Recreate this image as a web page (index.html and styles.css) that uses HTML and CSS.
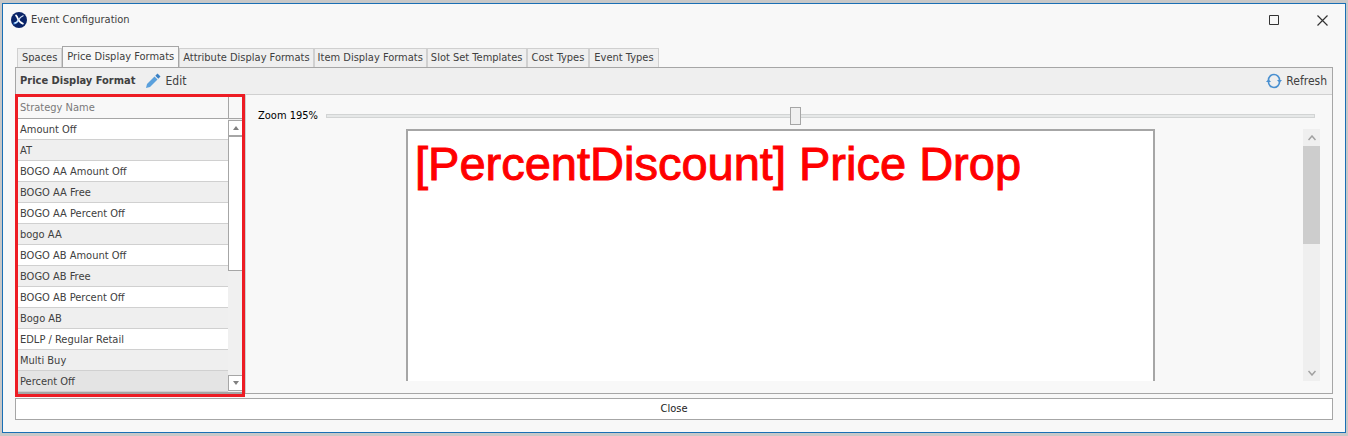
FILE: index.html
```html
<!DOCTYPE html>
<html lang="en">
<head>
<meta charset="utf-8">
<title>Event Configuration</title>
<link rel="stylesheet" href="styles.css">
</head>
<body>
<div class="window">
  <header class="titlebar">
    <svg class="logo" viewBox="0 0 16 16" aria-hidden="true"><circle cx="8" cy="8" r="8" fill="#0a2468"/><path d="M2.500 11.500q3 0 5-3.500" stroke="#3b8ee0" stroke-width="1.800" fill="none"/><path d="M4.500 3q1.500 1 2.500 4t5.500 5" stroke="#fff" stroke-width="1.800" fill="none"/><path d="M12.500 3.500Q9 5 7.500 8t-4 3" stroke="#d8e6f8" stroke-width="1.300" fill="none"/></svg>
    <h1 class="title">Event Configuration</h1>
    <button class="win-btn" aria-label="Maximize"><svg viewBox="0 0 11 11"><path d="M.5.5h9v9h-9z" fill="none" stroke="#333"/></svg></button>
    <button class="win-btn" aria-label="Close window"><svg viewBox="0 0 11 11"><path d="M.5.5l10 10M10.500.5l-10 10" fill="none" stroke="#333" stroke-width="1.200"/></svg></button>
  </header>
  <nav class="tabs" role="tablist">
    <button class="tab" role="tab">Spaces</button>
    <button class="tab active" role="tab" aria-selected="true">Price Display Formats</button>
    <button class="tab snug" role="tab">Attribute Display Formats</button>
    <button class="tab snug" role="tab">Item Display Formats</button>
    <button class="tab snug" role="tab">Slot Set Templates</button>
    <button class="tab" role="tab">Cost Types</button>
    <button class="tab" role="tab">Event Types</button>
  </nav>
  <main class="panel">
    <div class="toolbar">
      <h2 class="heading">Price Display Format</h2>
      <button class="tool"><svg viewBox="0 0 16 16" aria-hidden="true"><path d="M1 15l1-4 7.500-7.500 3 3L5 14z" fill="#5aa0dc"/><path d="M10.300 2.700L12.500.5l3 3-2.200 2.200z" fill="#3a80c4"/></svg>Edit</button>
      <button class="tool refresh"><svg viewBox="0 0 16 16" aria-hidden="true"><path d="M2.500 7a5.500 5.500 0 0 1 11 0M13.500 9a5.500 5.500 0 0 1-11 0" fill="none" stroke="#4a90d0" stroke-width="1.600"/><path d="M11 7h5l-2.500 3zM0 9h5L2.500 6z" fill="#4a90d0"/></svg>Refresh</button>
    </div>
    <div class="content">
      <section class="list">
        <table class="grid">
          <thead><tr><th>Strategy Name</th></tr></thead>
          <tbody>
            <tr><td>Amount Off</td></tr>
            <tr><td>AT</td></tr>
            <tr><td>BOGO AA Amount Off</td></tr>
            <tr><td>BOGO AA Free</td></tr>
            <tr><td>BOGO AA Percent Off</td></tr>
            <tr><td>bogo AA</td></tr>
            <tr><td>BOGO AB Amount Off</td></tr>
            <tr><td>BOGO AB Free</td></tr>
            <tr><td>BOGO AB Percent Off</td></tr>
            <tr><td>Bogo AB</td></tr>
            <tr><td>EDLP / Regular Retail</td></tr>
            <tr><td>Multi Buy</td></tr>
            <tr class="selected"><td>Percent Off</td></tr>
          </tbody>
        </table>
        <div class="list-side">
          <div class="corner"></div>
          <div class="list-scroll">
            <button class="arrow" aria-label="Scroll list up"><svg viewBox="0 0 6 4"><path d="M0 4l3-4 3 4z" fill="#808080"/></svg></button>
            <div class="list-thumb"></div>
            <button class="arrow down" aria-label="Scroll list down"><svg viewBox="0 0 6 4"><path d="M0 0h6L3 4z" fill="#808080"/></svg></button>
          </div>
        </div>
      </section>
      <section class="preview">
        <div class="zoom">
          <label for="zoom">Zoom 195%</label>
          <input id="zoom" class="slider" type="range" min="0" max="411" value="195">
        </div>
        <div class="viewport">
          <div class="page"><p class="sample">[PercentDiscount] Price Drop</p></div>
          <div class="scroll">
            <button class="scroll-btn" aria-label="Scroll up"><svg viewBox="0 0 8 6"><path d="M.5 5L4 1l3.500 4" fill="none" stroke="#a0a0a0" stroke-width="1.500"/></svg></button>
            <div class="scroll-thumb"></div>
            <button class="scroll-btn down" aria-label="Scroll down"><svg viewBox="0 0 8 6"><path d="M.5 1L4 5l3.500-4" fill="none" stroke="#a0a0a0" stroke-width="1.500"/></svg></button>
          </div>
        </div>
      </section>
    </div>
  </main>
  <button class="close">Close</button>
</div>
</body>
</html>
```
FILE: styles.css
```css
* { box-sizing: border-box; }
body {
  margin: 0;
  min-height: 100vh;
  padding: 3px 2px;
  display: flex;
  background: #c8c8c8;
  font: 11px/16px "DejaVu Sans Condensed", "DejaVu Sans", sans-serif;
  color: #404040;
}
button {
  font: inherit;
  color: inherit;
  margin: 0;
  padding: 0;
  border: 0;
  background: none;
}
svg { display: block; }
.window {
  flex: 1;
  display: flex;
  flex-direction: column;
  border: 1px solid #1a6fb5;
  background: #f8f8f8;
  padding: 0 12px 12px;
}
.titlebar { display: flex; align-items: center; height: 32px; }
.logo { width: 16px; height: 16px; margin-left: -4px; }
.title { flex: 1; margin: 0 0 0 4px; font-size: 11px; font-weight: normal; }
.win-btn { width: 48px; height: 32px; display: grid; place-items: center; }
.win-btn:last-child { margin-right: -13px; }
.win-btn svg { width: 11px; height: 11px; }
.tabs { display: flex; align-items: flex-end; margin: 10px 0 -1px 2px; }
.tab {
  height: 20px;
  padding: 0 4px;
  border: 1px solid #d0d0d0;
  border-bottom-color: #a6a6a6;
  background: #efefef;
}
.tab.snug { padding: 0 3px; }
.tab.active {
  height: 22px;
  padding: 0 4px;
  border-color: #a6a6a6;
  border-bottom-color: #f8f8f8;
  background: #f8f8f8;
}
.panel {
  flex: 1;
  display: flex;
  flex-direction: column;
  border: 1px solid #a6a6a6;
}
.toolbar {
  display: flex;
  align-items: center;
  height: 27px;
  padding: 0 5px 0 4px;
  border-bottom: 1px solid #d0d0d0;
  background: #efefef;
}
.heading { margin: 0 10px 0 0; font-size: 11px; font-weight: bold; }
.tool { display: flex; align-items: center; gap: 4px; font-size: 12px; }
.tool svg { width: 16px; height: 16px; }
.refresh { margin-left: auto; }
.content { flex: 1; display: flex; }
.list {
  display: flex;
  width: 230px;
  margin: -1px 0 -4px -1px;
  border: 3px solid #ed1c24;
  background: #f0f0f0;
  box-shadow: inset 0 -2px #a6a6a6;
}
.grid { flex: 1; border-collapse: separate; border-spacing: 0; align-self: flex-start; }
.grid th {
  height: 22px;
  padding: 0 2px;
  text-align: left;
  font-weight: normal;
  color: #7a7a7a;
  background: #f8f8f8;
  border-bottom: 1px solid #a6a6a6;
}
.grid td {
  height: 21px;
  padding: 2px 2px 0;
  background: #fff;
  border-bottom: 1px solid #d0d0d0;
}
.grid tr:nth-child(even) td { background: #efefef; }
.grid .selected td { background: #e4e4e4; }
.list-side { width: 14px; display: flex; flex-direction: column; }
.corner { height: 22px; background: #f8f8f8; border-left: 1px solid #a6a6a6; border-bottom: 1px solid #a6a6a6; }
.list-scroll { flex: 1; display: flex; flex-direction: column; padding: 1px 0 3px; }
.arrow { height: 16px; display: grid; place-items: center; border: 1px solid #a6a6a6; border-right: 0; background: #fff; }
.arrow svg { width: 6px; height: 4px; }
.list-thumb { height: 135px; border: 1px solid #a6a6a6; border-right: 0; background: #fff; }
.down { margin-top: auto; }
.preview { flex: 1; display: flex; flex-direction: column; border-left: 1px solid #d0d0d0; padding: 10px 12px 12px; }
.zoom { display: flex; align-items: center; gap: 8px; height: 22px; margin-right: 5px; color: #000; }
.slider { flex: 1; height: 18px; margin: 0; appearance: none; background: none; }
.slider::-webkit-slider-runnable-track { height: 4px; background: #e6e8e8; border: 1px solid #d2d4d4; }
.slider::-webkit-slider-thumb {
  appearance: none;
  width: 11px;
  height: 18px;
  margin-top: -8px;
  background: #f0f0f0;
  border: 1px solid #a6a6a6;
}
.viewport { flex: 1; display: flex; margin-top: 2px; }
.page {
  width: 72%;
  max-width: 749px;
  margin: 0 auto;
  border: 2px solid #a6a6a6;
  border-bottom: 0;
  background: #fff;
}
.sample {
  margin: 7px 0 0 7px;
  font: 47px/52px "Liberation Sans", Arial, sans-serif;
  color: #f00;
  -webkit-text-stroke: 1px #f00;
  white-space: nowrap;
}
.scroll { width: 17px; display: flex; flex-direction: column; background: #efefef; }
.scroll-btn { height: 17px; display: grid; place-items: center; }
.scroll-btn svg { width: 8px; height: 6px; }
.scroll-thumb { height: 98px; background: #cdcdcd; }
.close { height: 22px; margin-top: 4px; border: 1px solid #a6a6a6; background: #fff; color: #222; }
```
